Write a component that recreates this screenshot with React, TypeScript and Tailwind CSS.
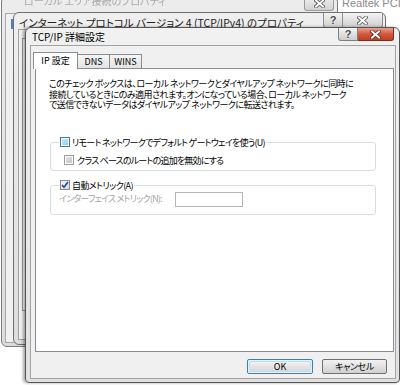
import React from "react";

function CloseGlyph({ light = true }: { light?: boolean }) {
  return (
    <svg width="11" height="9" viewBox="0 0 11 9">
      <path d="M2 1.5 L9 7.5 M9 1.5 L2 7.5" stroke={light ? "#5a2a20" : "#555"} strokeWidth="3.6" strokeLinecap="square" fill="none" />
      <path d="M2 1.5 L9 7.5 M9 1.5 L2 7.5" stroke="#ffffff" strokeWidth="2" strokeLinecap="square" fill="none" />
    </svg>
  );
}

function HelpGlyph() {
  return (
    <span className="text-[11px] leading-[11px] font-bold text-[#4a4a4a] font-['Liberation_Sans',sans-serif] [text-shadow:0_0_1px_#fff,0_0_1px_#fff]">?</span>
  );
}

function BackWindow() {
  return (
    <div className="absolute left-[1px] top-[-4px] w-[337px] h-[351px] rounded-[6px] border border-[#7b7b7b] bg-linear-to-b from-[#ececec] to-[#dcdcdc] flex flex-col">
      <div className="h-[16px] flex items-start">
        <span className="ml-[22px] mt-[-2px] text-[10px] leading-[12px] text-[#aaaaaa] blur-[0.6px]">ローカル エリア接続のプロパティ</span>
        <div className="ml-auto mr-[3px] flex">
          <div className="w-[30px] h-[14px] rounded-b-[3px] border border-t-0 border-[#9a9a9a] bg-linear-to-b from-[#eeeeee] to-[#d2d2d2] flex items-center justify-center">
            <CloseGlyph light={false} />
          </div>
        </div>
      </div>
      <div className="flex-1 mx-[3px] mb-[3px] border border-[#a7a7a7] bg-[#f0f0f0] flex">
        <div className="ml-[5px] mt-[5px] w-[4px] h-[10px] bg-[#4f82c2]" />
      </div>
    </div>
  );
}

function MiddleWindow() {
  return (
    <div className="absolute left-[13px] top-[12px] w-[373px] h-[333px] rounded-[6px] border border-[#6f6f6f] bg-linear-to-b from-[#efefef] to-[#dddddd] flex flex-col">
      <div className="h-[16px] flex items-start">
        <span className="ml-[5px] mt-[3px] text-[10.5px] leading-[13px] text-[#222] whitespace-nowrap">
          インターネット プロトコル バージョン 4 (TCP/IPv4) のプロパティ
        </span>
        <div className="ml-auto mr-[2px] flex">
          <div className="w-[20px] h-[15px] rounded-bl-[3px] border border-t-0 border-[#8f8f8f] bg-linear-to-b from-[#f3f3f3] to-[#d0d0d0] flex items-center justify-center">
            <HelpGlyph />
          </div>
          <div className="w-[40px] h-[15px] rounded-br-[3px] border border-t-0 border-l-0 border-[#8f8f8f] bg-linear-to-b from-[#f3f3f3] to-[#d0d0d0] flex items-center justify-center">
            <CloseGlyph light={false} />
          </div>
        </div>
      </div>
      <div className="flex-1 mx-[4px] mb-[4px] border border-[#9f9f9f] bg-[#f0f0f0] flex">
        <div className="ml-[3px] mt-[8px] mb-[28px] flex-1 border border-[#9a9da3] bg-white" />
      </div>
    </div>
  );
}

function CheckHover() {
  return (
    <span className="w-[10px] h-[10px] border border-[#3b79aa] bg-white p-[1px] flex shrink-0">
      <span className="flex-1 bg-linear-to-br from-[#c9e8f8] to-[#8ccbec]" />
    </span>
  );
}

function CheckGray() {
  return (
    <span className="w-[10px] h-[10px] border border-[#9c9c9c] bg-white p-[1px] flex shrink-0">
      <span className="flex-1 bg-linear-to-br from-[#e4e4e4] to-[#c4c4c4]" />
    </span>
  );
}

function CheckChecked() {
  return (
    <span className="w-[10px] h-[10px] border border-[#8a8a8a] bg-linear-to-br from-[#f4f4f4] to-[#dcdcdc] flex items-center justify-center shrink-0">
      <svg width="8" height="8" viewBox="0 0 8 8">
        <path d="M1 4 L3 6.3 L7 1" stroke="#23449a" strokeWidth="1.6" fill="none" />
      </svg>
    </span>
  );
}

function FrontWindow() {
  return (
    <div className="absolute left-[25px] top-[27px] w-[375px] h-[356px] rounded-t-[6px] rounded-b-[4px] border border-[#555] bg-linear-to-b from-[#f1f1f1] to-[#e0e0e0] shadow-[-2px_0_3px_rgba(0,0,0,0.35)] flex flex-col">
      <div className="h-[17px] flex items-start shrink-0">
        <span className="ml-[6px] mt-[3px] text-[10px] leading-[12px] text-black whitespace-nowrap">TCP/IP 詳細設定</span>
        <div className="ml-auto mr-[5px] flex">
          <div className="w-[20px] h-[13px] rounded-bl-[3px] border border-t-0 border-[#7f7f7f] bg-linear-to-b from-[#f4f4f4] to-[#cdcdcd] flex items-center justify-center">
            <HelpGlyph />
          </div>
          <div className="w-[36px] h-[13px] rounded-br-[3px] border border-t-0 border-l-0 border-[#7c2b1c] bg-linear-to-b from-[#e9a08e] via-[#d2583d] to-[#c33d22] flex items-center justify-center">
            <CloseGlyph />
          </div>
        </div>
      </div>
      <div className="flex-1 ml-[4px] mr-[3px] mb-[3px] border border-[#a2a2a2] bg-[#f0f0f0] flex flex-col pt-[6px] pl-[2px] pr-[1px]">
        {/* tabs */}
        <div className="flex items-end h-[16px] relative z-10">
          <div className="w-[45px] border border-b-0 border-[#898c95] bg-white flex items-center justify-center text-[9px] leading-[10px] -mb-px h-[17px] pb-px">IP 設定</div>
          <div className="h-[14px] w-[32px] border border-l-0 border-b-0 border-[#898c95] bg-linear-to-b from-[#f6f6f6] to-[#e2e2e2] flex items-center justify-center text-[9px] leading-[10px]">DNS</div>
          <div className="h-[14px] w-[32px] border border-l-0 border-b-0 border-[#898c95] bg-linear-to-b from-[#f6f6f6] to-[#e2e2e2] flex items-center justify-center text-[9px] leading-[10px]">WINS</div>
        </div>
        {/* panel */}
        <div className="ml-[2px] h-[284px] border border-[#898c95] bg-white flex flex-col text-[9px]">
          <p className="ml-[13px] mt-[10px] leading-[10.5px] whitespace-nowrap tracking-[-0.55px]">
            このチェック ボックスは、ローカル ネットワークとダイヤルアップ ネットワークに同時に<br />
            接続しているときにのみ適用されます。オンになっている場合、ローカル ネットワーク<br />
            で送信できないデータはダイヤルアップ ネットワークに転送されます。
          </p>
          <fieldset className="ml-[14px] mr-[17px] mt-[26px] border border-[#d5dfe5] rounded-[3px] pl-[8px] pt-[7px] pb-[4px]">
            <legend className="px-[1px] flex items-center gap-[2px] h-[11px] leading-[11px]">
              <CheckHover />
              <span className="whitespace-nowrap tracking-[-0.75px]">リモート ネットワークでデフォルト ゲートウェイを使う(U)</span>
            </legend>
            <div className="ml-[5px] flex items-center gap-[3px] h-[11px] leading-[11px]">
              <CheckGray />
              <span className="whitespace-nowrap tracking-[-0.8px]">クラス ベースのルートの追加を無効にする</span>
            </div>
          </fieldset>
          <fieldset className="ml-[14px] mr-[17px] mt-[9px] border border-[#d5dfe5] rounded-[3px] pl-[8px] pt-[1px] pb-[7px]">
            <legend className="px-[1px] flex items-center gap-[2px] h-[11px] leading-[11px]">
              <CheckChecked />
              <span className="whitespace-nowrap tracking-[-0.6px]">自動メトリック(A)</span>
            </legend>
            <div className="flex items-center h-[15px]">
              <span className="w-[116px] text-[#a3a3a3] whitespace-nowrap tracking-[-0.8px]">インターフェイス メトリック(N):</span>
              <div className="w-[68px] h-[15px] border border-[#b5b5b5] bg-white" />
            </div>
          </fieldset>
        </div>
        {/* buttons */}
        <div className="flex justify-end gap-[9px] mt-[7px] mr-[7px] text-[9px]">
          <div className="w-[66px] h-[15px] rounded-[2px] border border-[#3c7fb1] p-px">
            <div className="w-full h-full rounded-[1px] border border-[#b8e0f5] bg-linear-to-b from-[#f2f2f2] to-[#d8d8d8] flex items-center justify-center leading-[10px]">OK</div>
          </div>
          <div className="w-[65px] h-[15px] rounded-[2px] border border-[#707070] bg-linear-to-b from-[#f2f2f2] to-[#d0d0d0] flex items-center justify-center leading-[10px] tracking-[-0.4px]">キャンセル</div>
        </div>
      </div>
    </div>
  );
}

export default function App() {
  return (
    <div className="relative w-[400px] h-[385px] overflow-hidden bg-white font-['Noto_Sans_CJK_JP',sans-serif] text-black [font-feature-settings:'palt']">
      <div className="absolute left-[342px] top-[-3px] text-[11px] leading-[12px] text-[#8a8a8a] font-['Liberation_Sans',sans-serif] whitespace-nowrap">
        Realtek PCIe
      </div>
      <BackWindow />
      <MiddleWindow />
      <FrontWindow />
    </div>
  );
}
